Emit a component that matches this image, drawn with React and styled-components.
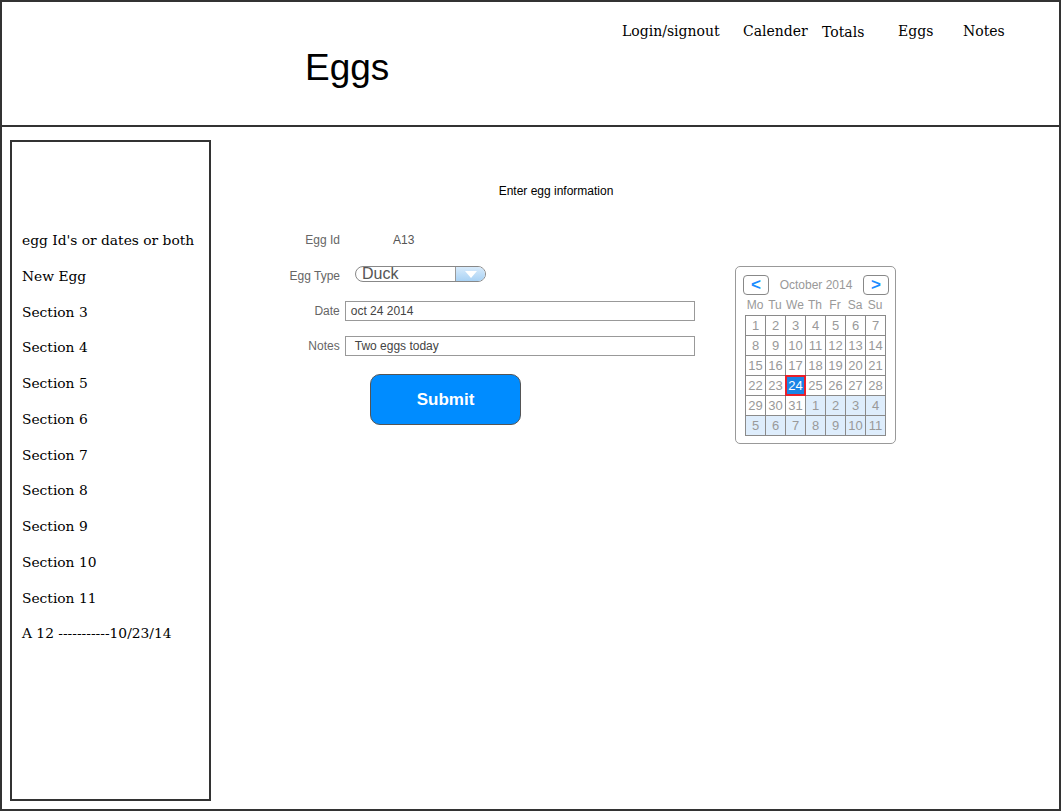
import React from "react";
import styled, { createGlobalStyle } from "styled-components";

const GlobalStyle = createGlobalStyle`
  html, body {
    margin: 0;
    padding: 0;
    background: #fff;
    overflow: hidden;
  }
  * {
    box-sizing: border-box;
  }
`;

const Frame = styled.div`
  width: 1061px;
  height: 811px;
  border: 2px solid #333;
  display: flex;
  flex-direction: column;
  font-family: "Liberation Sans", Arial, sans-serif;
`;

const Header = styled.header`
  height: 125px;
  flex: 0 0 125px;
  border-bottom: 2px solid #333;
  display: flex;
  align-items: flex-start;
`;

const Title = styled.h1`
  margin: 0;
  width: 620px;
  padding: 44px 0 0 303px;
  font-family: "Liberation Sans", Arial, sans-serif;
  font-weight: normal;
  font-size: 37px;
  line-height: 44px;
  color: #000;
`;

const Nav = styled.nav`
  display: flex;
  padding-top: 19px;
`;

const NavItem = styled.span`
  width: ${(p) => p.$w}px;
  margin-top: ${(p) => p.$dy || 0}px;
  font-family: "DejaVu Serif", serif;
  font-size: 14px;
  line-height: 20px;
  color: #000;
  white-space: nowrap;
`;

const Main = styled.div`
  flex: 1;
  display: flex;
  padding: 13px 0 8px 8px;
  min-height: 0;
`;

const Sidebar = styled.aside`
  width: 201px;
  border: 2px solid #333;
  padding: 81px 0 0 10px;
`;

const SideItem = styled.div`
  height: 35.75px;
  line-height: 35.75px;
  font-family: "DejaVu Serif", serif;
  font-size: 13.8px;
  color: #000;
  white-space: nowrap;
`;

const Content = styled.section`
  flex: 1;
`;

const Heading = styled.div`
  width: 690px;
  margin-top: 44px;
  text-align: center;
  font-size: 12px;
  line-height: 14px;
  color: #000;
`;

const FormArea = styled.div`
  display: flex;
  align-items: flex-start;
  margin-top: 34px;
`;

const Form = styled.div`
  width: 484px;
`;

const Row = styled.div`
  display: flex;
  align-items: center;
  height: ${(p) => p.$h}px;
  margin-top: ${(p) => p.$mt || 0}px;
`;

const Label = styled.label`
  width: 129px;
  text-align: right;
  font-size: 12px;
  color: #666;
  padding-top: ${(p) => p.$dy || 0}px;
`;

const Value = styled.span`
  margin-left: 53px;
  font-size: 12px;
  color: #555;
`;

const Select = styled.div`
  margin-left: 15px;
  width: 131px;
  height: 16px;
  border: 1px solid #888;
  border-radius: 8px;
  display: flex;
  overflow: hidden;
`;

const SelectText = styled.span`
  flex: 1;
  padding-left: 6px;
  font-size: 16px;
  line-height: 16px;
  color: #555;
  margin-top: -1px;
`;

const SelectArrow = styled.span`
  width: 30px;
  border-left: 1px solid #999;
  background: linear-gradient(#d8ebfb, #a9d2f4);
  display: flex;
  align-items: center;
  justify-content: center;
`;

const Input = styled.div`
  margin-left: 5px;
  width: 351px;
  height: 20px;
  border: 1px solid #999;
  padding-left: ${(p) => p.$pl}px;
  font-size: 12px;
  line-height: 18px;
  color: #444;
`;

const SubmitButton = styled.button`
  display: block;
  margin: 18px 0 0 159px;
  width: 151px;
  height: 51px;
  border: 1px solid #555;
  border-radius: 10px;
  background: #008cff;
  color: #fff;
  font-family: "Liberation Sans", Arial, sans-serif;
  font-weight: bold;
  font-size: 17px;
`;

const Calendar = styled.div`
  margin: 34px 0 0 40px;
  width: 161px;
  border: 1px solid #999;
  border-radius: 5px;
  padding: 8px 9px 7px 9px;
`;

const CalHead = styled.div`
  display: flex;
  align-items: center;
  justify-content: space-between;
  margin-left: -2px;
  margin-right: -3px;
`;

const CalButton = styled.button`
  width: 26px;
  height: 20px;
  padding: 0;
  border: 1px solid #888;
  border-radius: 4px;
  background: #fff;
  color: #1a8cff;
  font-family: "Liberation Sans", Arial, sans-serif;
  font-weight: bold;
  font-size: 17px;
  line-height: 18px;
`;

const Month = styled.span`
  font-size: 12px;
  color: #999;
`;

const DayNames = styled.div`
  display: grid;
  grid-template-columns: repeat(7, 20px);
  margin-top: 1px;
  font-size: 12px;
  line-height: 19px;
  color: #999;
  text-align: center;
`;

const Grid = styled.div`
  display: grid;
  grid-template-columns: repeat(7, 19px);
  grid-auto-rows: 19px;
  gap: 1px;
  padding: 1px;
  width: 141px;
  background: #8a8a8a;
`;

const Cell = styled.div`
  display: flex;
  align-items: center;
  justify-content: center;
  font-size: 13px;
  color: ${(p) => (p.$sel ? "#fff" : "#999")};
  background: ${(p) => (p.$sel ? "#1a84e6" : p.$next ? "#deedfc" : "#fff")};
  outline: ${(p) => (p.$sel ? "2px solid #e8202a" : "none")};
  outline-offset: -1px;
`;

const sideItems = [
  "egg Id's or dates or both",
  "New Egg",
  "Section 3",
  "Section 4",
  "Section 5",
  "Section 6",
  "Section 7",
  "Section 8",
  "Section 9",
  "Section 10",
  "Section 11",
  "A 12 -----------10/23/14",
];

const days = [];
for (let i = 1; i <= 31; i++) days.push({ n: i, next: false });
for (let i = 1; i <= 11; i++) days.push({ n: i, next: true });

export default function App() {
  return (
    <>
      <GlobalStyle />
      <Frame>
        <Header>
          <Title>Eggs</Title>
          <Nav>
            <NavItem $w={121}>Login/signout</NavItem>
            <NavItem $w={79}>Calender</NavItem>
            <NavItem $w={76} $dy={1}>Totals</NavItem>
            <NavItem $w={65}>Eggs</NavItem>
            <NavItem $w={50}>Notes</NavItem>
          </Nav>
        </Header>
        <Main>
          <Sidebar>
            {sideItems.map((s, i) => (
              <SideItem key={i}>{s}</SideItem>
            ))}
          </Sidebar>
          <Content>
            <Heading>Enter egg information</Heading>
            <FormArea>
              <Form>
                <Row $h={16}>
                  <Label>Egg Id</Label>
                  <Value>A13</Value>
                </Row>
                <Row $h={16} $mt={18}>
                  <Label $dy={4}>Egg Type</Label>
                  <Select>
                    <SelectText>Duck</SelectText>
                    <SelectArrow>
                      <svg width="14" height="9" viewBox="0 0 14 9">
                        <path d="M1 1 L13 1 L7 8 Z" fill="#fff" />
                      </svg>
                    </SelectArrow>
                  </Select>
                </Row>
                <Row $h={20} $mt={19}>
                  <Label>Date</Label>
                  <Input $pl={5}>oct 24 2014</Input>
                </Row>
                <Row $h={20} $mt={15}>
                  <Label>Notes</Label>
                  <Input $pl={9}>Two eggs today</Input>
                </Row>
                <SubmitButton>Submit</SubmitButton>
              </Form>
              <Calendar>
                <CalHead>
                  <CalButton>&lt;</CalButton>
                  <Month>October 2014</Month>
                  <CalButton>&gt;</CalButton>
                </CalHead>
                <DayNames>
                  {["Mo", "Tu", "We", "Th", "Fr", "Sa", "Su"].map((d) => (
                    <span key={d}>{d}</span>
                  ))}
                </DayNames>
                <Grid>
                  {days.map((d, i) => (
                    <Cell key={i} $next={d.next} $sel={!d.next && d.n === 24}>
                      {d.n}
                    </Cell>
                  ))}
                </Grid>
              </Calendar>
            </FormArea>
          </Content>
        </Main>
      </Frame>
    </>
  );
}
